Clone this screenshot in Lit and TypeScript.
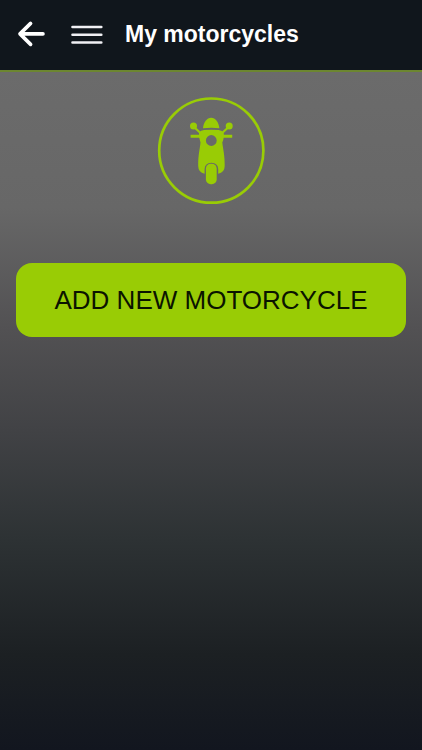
import { LitElement, html, css } from "lit";
import { customElement } from "lit/decorators.js";

@customElement("app-root")
export class AppRoot extends LitElement {
  static styles = css`
    :host {
      display: flex;
      flex-direction: column;
      min-height: 100vh;
      font-family: "Liberation Sans", Arial, sans-serif;
      background: #12161d;
    }
    .bar {
      display: flex;
      align-items: center;
      box-sizing: border-box;
      height: 72px;
      padding: 0 16px 2px;
      background: #10161c;
      border-bottom: 2px solid #6c8630;
    }
    .icon-button {
      display: flex;
      padding: 0;
      border: 0;
      background: none;
      cursor: pointer;
    }
    .menu {
      margin-left: 24px;
    }
    .title {
      margin: 0 0 0 22px;
      font-size: 23px;
      line-height: 28px;
      font-weight: bold;
      color: #fff;
    }
    .content {
      flex: 1;
      display: flex;
      flex-direction: column;
      align-items: center;
      gap: 58px;
      padding: 25px 16px;
      background: linear-gradient(
        #6b6b6b 0%,
        #676767 20%,
        #525153 38%,
        #414245 53%,
        #2d3234 69%,
        #1c2023 86%,
        #12161f 100%
      );
    }
    .emblem {
      display: block;
    }
    .add {
      width: 100%;
      padding: 22px 8px;
      border: 0;
      border-radius: 16px;
      background: #99cc05;
      color: #0b1400;
      font-family: inherit;
      font-size: 26px;
      line-height: 30px;
      cursor: pointer;
    }
  `;

  render() {
    return html`
      <header class="bar">
        <button class="icon-button" aria-label="Back">
          <svg width="30" height="28" viewBox="0 0 30 28" fill="none" stroke="#fff" stroke-width="3.6" stroke-linecap="round" stroke-linejoin="round">
            <path d="M27 13.9H4M14.6 3.4L4 13.9L14.6 24.4" />
          </svg>
        </button>
        <button class="icon-button menu" aria-label="Menu">
          <svg width="33" height="28" viewBox="0 0 33 28" fill="none" stroke="#f0f0f4" stroke-width="2.6" stroke-linecap="round">
            <path d="M2.5 7H31.3M2.5 14.7H31.3M2.5 22.5H31.3" />
          </svg>
        </button>
        <h1 class="title">My motorcycles</h1>
      </header>
      <main class="content">
        <svg class="emblem" width="108" height="108" viewBox="0 0 108 108" role="img" aria-label="Motorcycle">
          <circle cx="54.3" cy="53.6" r="52.1" fill="none" stroke="#99cc05" stroke-width="2.7" />
          <g fill="#99cc05">
            <path d="M46 31.3C46.6 25 50 20.8 54.2 20.8S61.8 25 62.4 31.3Q54.2 30.3 46 31.3Z" />
            <circle cx="36.5" cy="29" r="3.5" />
            <circle cx="72.2" cy="29" r="3.5" />
            <path d="M37.5 30.5L43.5 36M71.1 30.5L65.1 36" stroke="#99cc05" stroke-width="2.2" />
            <path d="M33.6 37.8H46V40.7H33.6ZM62.6 37.8H75.2V40.7H62.6Z" />
            <path fill-rule="evenodd" d="M42 35.4Q44 33.5 47 33.1Q54.3 32.3 61.5 33.1Q64.6 33.5 66.6 35.4Q67.6 40 65.3 45.5C66 52 67.8 58 67.7 69Q67.6 75.4 61.2 76.8V72Q60.9 66 54.4 65.8Q47.9 66 47.6 72V76.8Q41.3 75.4 41.2 69C41.1 58 42.9 52 43.5 45.5Q41.3 40 42 35.4ZM54.3 38.1A5.4 5.4 0 1 0 54.3 48.9A5.4 5.4 0 1 0 54.3 38.1Z" />
            <rect x="48.9" y="66.8" width="10.8" height="20.4" rx="4.8" />
          </g>
        </svg>
        <button class="add">ADD NEW MOTORCYCLE</button>
      </main>
    `;
  }
}
